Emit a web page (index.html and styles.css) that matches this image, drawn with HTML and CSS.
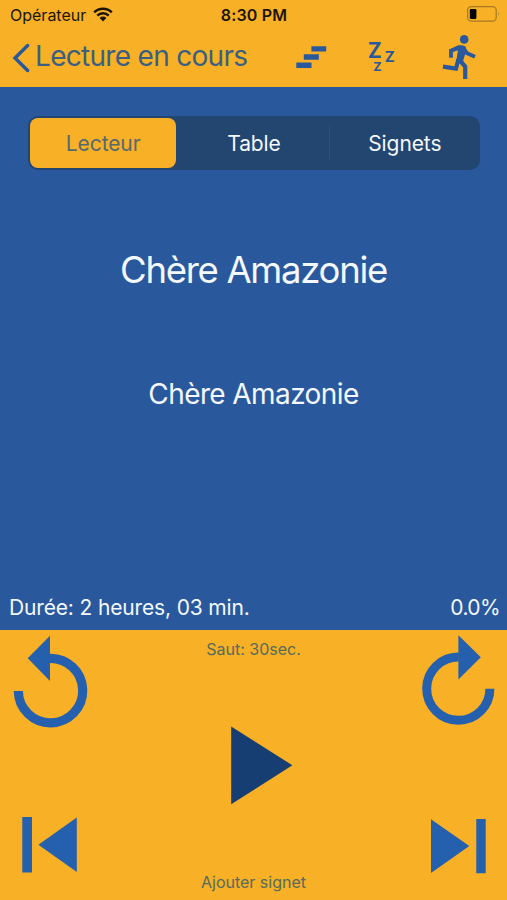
FILE: index.html
```html
<!DOCTYPE html>
<html lang="fr">
<head>
    <meta charset="UTF-8">
    <meta name="viewport" content="width=device-width, initial-scale=1.0">
    <title>Lecture en cours</title>
    <link rel="stylesheet" href="styles.css">
</head>
<body>
    <div class="status-bar">
        <div class="carrier">
            <span>Opérateur</span>
            <svg class="wifi" width="20" height="15" viewBox="0 0 20 15">
                <path d="M1.2 5.4A12.6 12.6 0 0 1 18.8 5.4M4.3 8.6A8.2 8.2 0 0 1 15.7 8.6" fill="none" stroke="#1c1505" stroke-width="2.5"/>
                <path d="M6.6 10.9A4.9 4.9 0 0 1 13.4 10.9L10 14.4Z" fill="#1c1505"/>
            </svg>
        </div>
        <div class="clock">8:30 PM</div>
        <svg class="battery" width="33" height="16" viewBox="0 0 33 16">
            <rect x="0.6" y="0.6" width="28.6" height="14.6" rx="3.6" fill="none" stroke="#a67a22" stroke-width="1.2"/>
            <rect x="2.8" y="3" width="6.6" height="10" rx="1.2" fill="#000"/>
            <path d="M31 5.8Q32.6 8 31 10.2Z" fill="#a67a22"/>
        </svg>
    </div>

    <div class="nav-bar">
        <div class="back">
            <svg width="18" height="30" viewBox="0 0 18 30">
                <path d="M15.6 2.5L3 15L15.6 27.5" fill="none" stroke="#2a589c" stroke-width="3.4" stroke-linecap="round"/>
            </svg>
            <span class="nav-title">Lecture en cours</span>
        </div>
        <div class="nav-icons">
            <svg width="32" height="50" viewBox="0 0 32 50">
                <path d="M15.4 14.3h14.8v5.3H15.4zM7.8 22.3h15v5.5H7.8zM.3 30.4h15.2V36H.3z" fill="#2a589c"/>
            </svg>
            <svg width="32" height="50" viewBox="0 0 32 50">
                <g class="zzz">
                    <text x="3.2" y="25.6" font-size="21.5">Z</text>
                    <text x="20" y="30.3" font-size="15.5">Z</text>
                    <text x="8.6" y="39.4" font-size="13">Z</text>
                </g>
            </svg>
            <svg class="runner" width="38" height="50" viewBox="0 0 38 50">
                <circle cx="24.2" cy="7.4" r="4.3" fill="#2a589c"/>
                <g fill="none" stroke="#2a589c">
                    <path d="M21 15.2L11 18.6V25.7M22.5 15L27 21.2L35 24.8" stroke-width="3.8"/>
                    <path d="M18.5 27L16 36.6L3 34.6M19.5 28L25.2 34.5V47" stroke-width="4.2"/>
                </g>
                <path d="M11 16.8L17.5 13.6Q22 12.4 25.5 14.6L26.5 18L23.2 28.5L23 31L16 31L18 18Z" fill="#2a589c"/>
            </svg>
        </div>
    </div>

    <div class="content">
        <div class="tabs">
            <div class="tab active">Lecteur</div>
            <div class="tab">Table</div>
            <div class="tab divider">Signets</div>
        </div>
        <h1 class="book-title">Chère Amazonie</h1>
        <h2 class="chapter-title">Chère Amazonie</h2>
        <div class="info">
            <span class="duration">Durée: 2 heures, 03 min.</span>
            <span class="percent">0.0%</span>
        </div>
    </div>

    <div class="controls">
        <div class="side">
            <svg width="100" height="100" viewBox="0 0 100 100">
                <path d="M50 5.7V51L27.7 28.3Z" fill="#2460ae"/>
                <path d="M18.3 61A32.2 32.2 0 1 0 49.5 28.4" fill="none" stroke="#2460ae" stroke-width="9.2"/>
            </svg>
            <svg width="100" height="100" viewBox="0 0 100 100">
                <path d="M22.3 17H32V72.5H22.3zM76.8 17.5V72L38.4 44.7z" fill="#2460ae"/>
            </svg>
        </div>
        <div class="middle">
            <span class="skip-label">Saut: 30sec.</span>
            <svg width="80" height="80" viewBox="0 0 80 80">
                <path d="M18.2 0.5V78.3L79.4 39.3Z" fill="#163e72"/>
            </svg>
            <span class="bookmark-label">Ajouter signet</span>
        </div>
        <div class="side">
            <svg width="100" height="100" viewBox="0 0 100 100">
                <path d="M51.4 5.3V49.5L73.8 27.3Z" fill="#2460ae"/>
                <path d="M82.9 58.7A31.6 31.6 0 1 1 51.8 27.1" fill="none" stroke="#2460ae" stroke-width="9"/>
            </svg>
            <svg width="100" height="100" viewBox="0 0 100 100">
                <path d="M69.3 19H78.7V73.3H69.3zM24 19.3V73L62.3 46z" fill="#2460ae"/>
            </svg>
        </div>
    </div>
</body>
</html>
```

FILE: styles.css
```css
body {
    margin: 0;
    height: 900px;
    display: flex;
    flex-direction: column;
    font-family: Inter, "Liberation Sans", sans-serif;
    background-color: #f8b026;
    overflow: hidden;
}
.status-bar {
    display: grid;
    grid-template-columns: 1fr auto 1fr;
    align-items: center;
    height: 30px;
    padding: 0 7px 0 10px;
    box-sizing: border-box;
    color: #1c1505;
}
.carrier {
    display: flex;
    align-items: center;
    gap: 7px;
    font-size: 16px;
}
.wifi {
    margin-bottom: 2px;
}
.clock {
    font-size: 16px;
    font-weight: 600;
    letter-spacing: 0.2px;
    margin-right: 2px;
}
.battery {
    justify-self: end;
    margin-bottom: 2px;
}
.nav-bar {
    display: flex;
    justify-content: space-between;
    height: 57px;
    padding: 0 29px 0 12px;
    color: #3b5f80;
}
.back {
    display: flex;
    align-items: center;
    gap: 5px;
    height: 56px;
}
.nav-title {
    font-size: 28px;
    line-height: 50px;
    padding-bottom: 4px;
    letter-spacing: -0.7px;
}
.nav-icons {
    display: flex;
    gap: 37px;
    padding-top: 2px;
}
.zzz {
    fill: #2a589c;
    font-family: Roboto, sans-serif;
    font-weight: 700;
}
.runner {
    margin-left: 6px;
}
.content {
    display: flex;
    flex-direction: column;
    height: 543px;
    background-color: #2a589c;
    color: #f4f8ff;
}
.tabs {
    display: grid;
    grid-template-columns: 1fr 1fr 1fr;
    height: 54px;
    margin: 29px 27px 0 28px;
    padding: 2px;
    box-sizing: border-box;
    border-radius: 10px;
    background-color: #234670;
}
.tab {
    display: flex;
    align-items: center;
    justify-content: center;
    font-size: 21px;
    letter-spacing: -0.1px;
    margin: 1px 0;
}
.tab.active {
    background-color: #f8b026;
    color: #566970;
    border-radius: 8px;
    margin: 0 3px 0 0;
}
.tab.divider {
    border-left: 1px solid #2b4f79;
    margin: 8px 0;
    padding-left: 2px;
}
.book-title {
    margin: 77px 0 0;
    font-size: 36.5px;
    line-height: 46px;
    font-weight: 400;
    letter-spacing: -1.3px;
    text-align: center;
}
.chapter-title {
    margin: 83px 0 0;
    font-size: 28px;
    line-height: 36px;
    font-weight: 400;
    letter-spacing: -0.6px;
    text-align: center;
}
.info {
    display: flex;
    justify-content: space-between;
    margin-top: auto;
    padding: 0 7px 8px 9px;
    font-size: 21px;
    line-height: 28px;
    letter-spacing: -0.15px;
}
.percent {
    letter-spacing: -0.6px;
}
.controls {
    display: flex;
    justify-content: space-between;
    height: 270px;
}
.side {
    display: flex;
    flex-direction: column;
    justify-content: space-between;
}
.middle {
    display: flex;
    flex-direction: column;
    align-items: center;
    justify-content: space-between;
    padding: 9px 0 8px;
    color: #566b5c;
    font-size: 16px;
    line-height: 20px;
}
```
